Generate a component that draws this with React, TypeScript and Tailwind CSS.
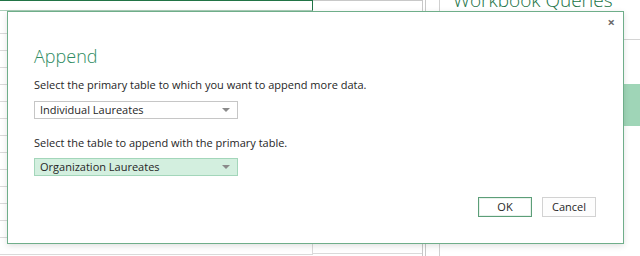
const ui = { fontFamily: '"Segoe UI", "Open Sans", "Noto Sans", sans-serif' };

function SheetColumn() {
  const rows = Array.from({ length: 13 });
  return (
    <div className="flex w-[313px] shrink-0 flex-col border-t border-[#217346]">
      <div className="h-[10px] border-r border-b border-r-[#217346] border-b-[#a9cdb8]" />
      <div className="h-[23px] border-r border-b border-r-[#217346] border-b-[#dadada]" />
      {rows.map((_, i) => (
        <div key={i} className="h-[17px] shrink-0 border-r border-b border-[#dadada]" />
      ))}
    </div>
  );
}

function Dropdown({ label, active }: { label: string; active?: boolean }) {
  return (
    <div
      className={`flex h-[18px] w-[204px] items-center justify-between border pl-[5px] pr-[7px] text-[11px] text-[#262626] ${
        active ? "border-[#a3d6ba] bg-[#d3efdf]" : "border-[#c6c6c6] bg-white"
      }`}
    >
      <span>{label}</span>
      <span className="h-0 w-0 border-x-[4px] border-t-[4px] border-x-transparent border-t-[#8a8a8a]" />
    </div>
  );
}

export default function App() {
  return (
    <div className="relative h-[256px] w-[640px] overflow-hidden bg-white" style={ui}>
      {/* excel sheet behind */}
      <div className="flex h-full">
        <SheetColumn />
        <div className="flex w-[110px] shrink-0 flex-col border-r border-[#c8c8c8]">
          <div className="h-[1px] bg-[#c8c8c8]" />
          <div className="flex-1" />
          <div className="mb-[2px] h-[1px] bg-[#dadada]" />
        </div>
        <div className="ml-[2px] w-[1px] shrink-0 bg-[#c8c8c8]" />
        <div className="ml-[13px] w-[1px] shrink-0 bg-[#d0d0d0]" />
        <div className="flex min-w-0 flex-1 flex-col">
          <div className="ml-[13px] mt-[-11px] whitespace-nowrap text-[19px] font-light leading-[22px] text-[#217346]">
            Workbook Queries
          </div>
          <div className="mt-[28px] h-[1px] bg-[#d4d4d4]" />
          <div className="mt-[44px] h-[42px] bg-[#9fd5b7]" />
        </div>
      </div>

      {/* dialog */}
      <div className="absolute left-[7px] top-[11px] flex h-[233px] w-[617px] flex-col border border-[#6fae8a] bg-white pl-[26px] shadow-[0_2px_6px_rgba(0,0,0,0.12)]">
        <div className="flex h-[22px] items-start justify-end pr-[8px] pt-[4px]">
          <span className="text-[13px] font-bold leading-[13px] text-[#6a6a6a]">×</span>
        </div>
        <div className="mt-[10px] text-[18px] font-light leading-[24px] text-[#2e8b62]">Append</div>
        <div className="mt-[9px] text-[11px] leading-[16px] text-[#262626]">
          Select the primary table to which you want to append more data.
        </div>
        <div className="mt-[8px]">
          <Dropdown label="Individual Laureates" />
        </div>
        <div className="mt-[16px] text-[11px] leading-[16px] text-[#262626]">
          Select the table to append with the primary table.
        </div>
        <div className="mt-[7px]">
          <Dropdown label="Organization Laureates" active />
        </div>
        <div className="mt-[21px] flex justify-end gap-[10px] pr-[27px] text-[11px] text-[#262626]">
          <button className="h-[20px] w-[54px] border border-[#5c9e78] bg-white outline outline-1 -outline-offset-2 outline-[#e8f2ec]">
            OK
          </button>
          <button className="h-[20px] w-[54px] border border-[#d2d2d2] bg-[#fdfdfd]">Cancel</button>
        </div>
      </div>
    </div>
  );
}
